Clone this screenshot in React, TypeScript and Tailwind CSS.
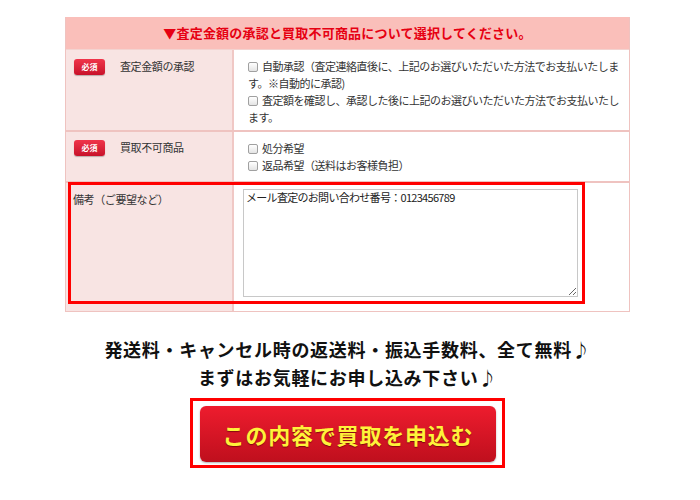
import React from 'react';

const Badge: React.FC = () => (
  <span className="inline-flex items-center justify-center w-[31px] h-[16px] rounded-[3px] bg-gradient-to-b from-[#f0344a] to-[#c8102a] text-white text-[8px] font-bold leading-none shadow-[0_1px_1px_rgba(0,0,0,0.25)]">
    必須
  </span>
);

const Check: React.FC = () => (
  <span className="inline-block w-[10px] h-[10px] mr-[4px] align-[-1px] rounded-[2px] border border-[#a0a0a0] bg-gradient-to-b from-white to-[#e4e4e4]" />
);

const App: React.FC = () => {
  return (
    <div className="w-[700px] h-[500px] bg-white pt-[17px] font-['Noto_Sans_CJK_JP',sans-serif] text-[#333]">
      <div className="ml-[65px] w-[565px]">
        {/* Form table */}
        <div className="border border-[#efc3c0] border-t-0">
          <div className="h-[32px] bg-[#fabfba] flex items-center justify-center text-[13px] font-bold text-[#e60012] tracking-[0.2px]">
            ▼査定金額の承認と買取不可商品について選択してください。
          </div>

          {/* Row 1 */}
          <div className="grid grid-cols-[168px_1fr] border-t border-[#f3d3d0]">
            <div className="bg-[#f8e4e3] border-r-2 border-[#f0c8c5] pl-[8px] pt-[9px] flex items-start gap-[15px]">
              <Badge />
              <span className="text-[11px] tracking-[-0.4px] leading-[17px] -mt-[1px]">査定金額の承認</span>
            </div>
            <div className="pl-[14px] pt-[8px] pb-[4px] text-[11px] leading-[17px] tracking-[-0.5px] whitespace-nowrap">
              <Check />自動承認（査定連絡直後に、上記のお選びいただいた方法でお支払いたしま<br />
              す。※自動的に承認)<br />
              <Check />査定額を確認し、承認した後に上記のお選びいただいた方法でお支払いたし<br />
              ます。
            </div>
          </div>

          {/* Row 2 */}
          <div className="grid grid-cols-[168px_1fr] border-t-2 border-[#efc3c0]">
            <div className="bg-[#f8e4e3] border-r-2 border-[#f0c8c5] pl-[8px] pt-[8px] flex items-start gap-[15px]">
              <Badge />
              <span className="text-[11px] tracking-[-0.4px] leading-[17px] -mt-[1px]">買取不可商品</span>
            </div>
            <div className="pl-[14px] pt-[8px] pb-[7px] text-[11px] leading-[17px] tracking-[-0.5px] whitespace-nowrap">
              <Check />処分希望<br />
              <Check />返品希望（送料はお客様負担）
            </div>
          </div>

          {/* Row 3 */}
          <div className="relative grid grid-cols-[168px_1fr] border-t-2 border-[#efc3c0]">
            <div className="bg-[#f8e4e3] border-r-2 border-[#f0c8c5] pl-[7px] pt-[8px] text-[11px] leading-[17px] tracking-[-0.4px]">
              備考（ご要望など）
            </div>
            <div className="pl-[9px] pt-[6px] pb-[14px]">
              <textarea
                readOnly
                defaultValue="メール査定のお問い合わせ番号：0123456789"
                className="block w-[335px] h-[108px] border border-[#c8c8c8] px-[2px] py-0 text-[11px] leading-[14px] tracking-[-0.7px] text-[#222] resize bg-white outline-none font-['Noto_Sans_CJK_JP',sans-serif]"
              />
            </div>
            <div className="absolute left-[2px] -top-[1px] w-[517px] h-[122px] border-[3px] border-[#ff0000] pointer-events-none" />
          </div>
        </div>

        {/* Message */}
        <div className="mt-[23px] text-center text-[18px] font-bold leading-[28px] tracking-[0.7px] text-[#111]">
          <p>発送料・キャンセル時の返送料・振込手数料、全て無料♪</p>
          <p>まずはお気軽にお申し込み下さい♪</p>
        </div>

        {/* Submit */}
        <div className="mt-[7px] flex justify-center">
          <div className="border-[3px] border-[#ff0000] pt-[5px] pb-[3px] pl-[7px] pr-[6px]">
            <button className="w-[296px] h-[56px] rounded-[6px] bg-gradient-to-b from-[#ee1c2e] to-[#bf0f1d] text-[#fff23a] text-[22px] font-bold tracking-[0.8px] [text-shadow:0_1px_1px_rgba(80,0,0,0.6)] shadow-[0_1px_2px_rgba(0,0,0,0.3)]">
              この内容で買取を申込む
            </button>
          </div>
        </div>
      </div>
    </div>
  );
};

export default App;
